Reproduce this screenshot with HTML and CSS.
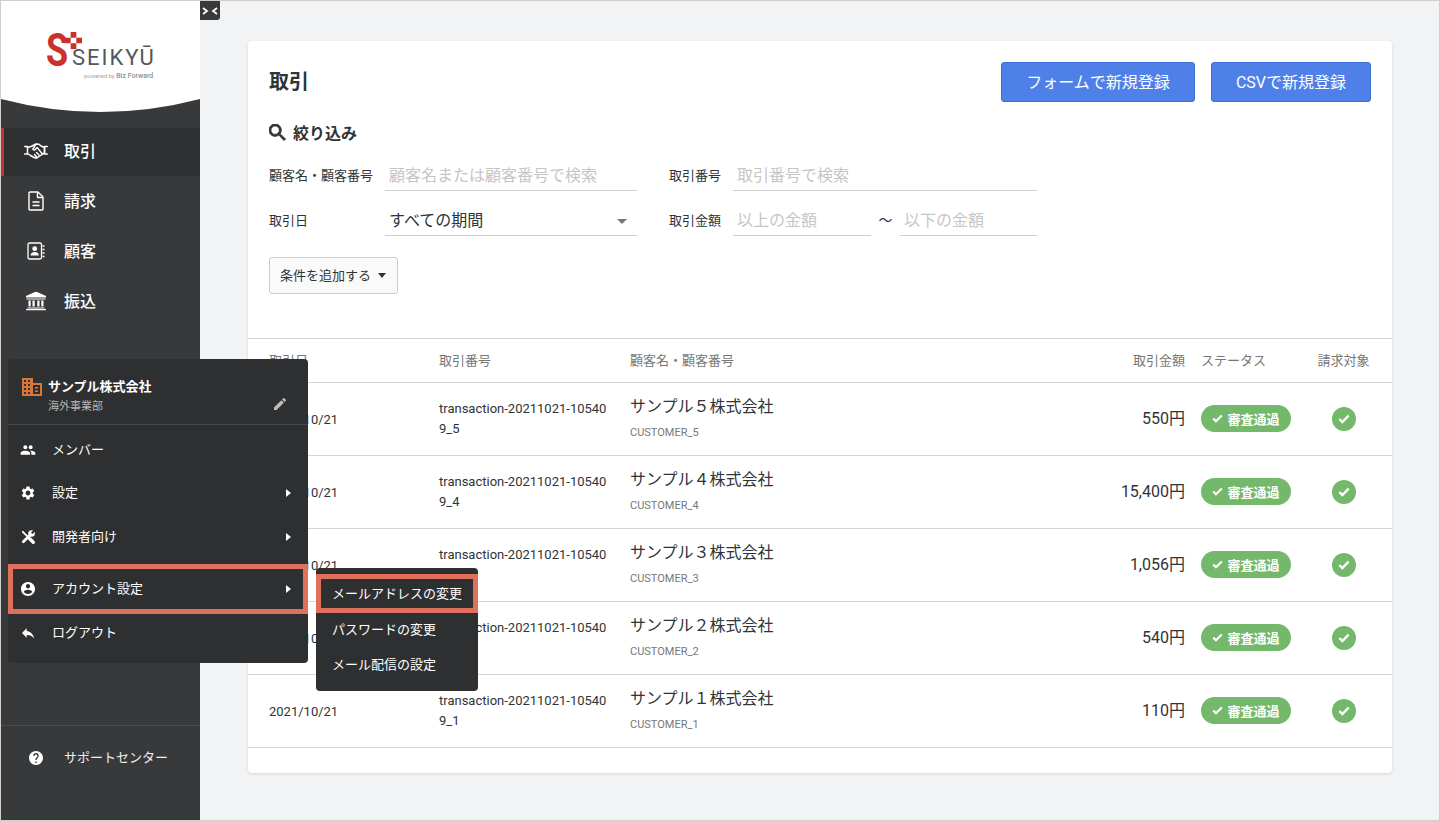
FILE: index.html
```html
<!DOCTYPE html>
<html lang="ja">
<head>
    <meta charset="UTF-8">
    <meta name="viewport" content="width=device-width, initial-scale=1.0">
    <title>取引</title>
    <link rel="stylesheet" href="styles.css">
</head>
<body>
<div class="app">

    <aside class="sidebar">
        <div class="logo-area">
            <div class="logo">
                <span class="logo-s">S</span>
                <svg class="logo-dots" width="17" height="17" viewBox="0 0 15 15"><path fill="#c9322b" d="M5 0h5v5H5zM10 5h5v5h-5zM0 5h5v5H0zM5 10h5v5H5z"/></svg>
                <span class="logo-name">SEIKYŪ</span>
                <span class="logo-sub">powered by <b>Biz Forward</b></span>
            </div>
        </div>
        <svg class="logo-curve" width="199" height="14" viewBox="0 0 199 14" preserveAspectRatio="none"><path fill="#fff" d="M0 0H199V0Q99.5 26 0 0Z"/></svg>

        <nav class="nav">
            <a class="nav-item active">
                <svg class="nav-icon" width="24" height="16" viewBox="0 0 24 16" fill="none" stroke="#fff" stroke-width="1.5" stroke-linejoin="round" stroke-linecap="round"><path d="M0.7 3.5H3.5V11H0.7M23.3 3.5H20.5V11H23.3"/><path d="M3.5 4.5L7 3.5 10 2 12 1 15 1.2 17 3 20.5 4.5V10L18 11.5 12.5 15.2 10 14.5 6.5 12.5 3.5 10.5"/><path d="M12 1.2L8.8 6.2C9.6 7.4 11 7.2 12 5.6L13.2 4.6 18 10.5M15 12L12.5 9.5M12.5 14L10.5 11.5"/></svg>
                <span>取引</span>
            </a>
            <a class="nav-item">
                <svg class="nav-icon" width="16" height="20" viewBox="0 0 16 20" fill="none" stroke="#fff" stroke-width="1.4" stroke-linejoin="round"><path d="M1 2C1 1.300 1.300 1 2 1H10L15 6V18C15 18.700 14.700 19 14 19H2C1.300 19 1 18.700 1 18Z"/><path d="M9.500 1V6.500H15" /><path d="M4.500 11H11.500M4.500 14.500H11.500" stroke-width="1.500"/></svg>
                <span>請求</span>
            </a>
            <a class="nav-item">
                <svg class="nav-icon" width="18" height="18" viewBox="0 0 18 18"><rect x="1" y="1" width="13.500" height="16" rx="1.500" fill="none" stroke="#fff" stroke-width="1.300"/><circle cx="7.700" cy="6.700" r="2.400" fill="#fff"/><path fill="#fff" d="M3.600 13.500C3.600 11 5.600 10 7.700 10S11.800 11 11.800 13.500Z"/><path stroke="#fff" stroke-width="1.300" d="M15.500 4H17.500M15.500 7.500H17.500M15.500 11H17.500M15.500 14.500H17.500"/></svg>
                <span>顧客</span>
            </a>
            <a class="nav-item">
                <svg class="nav-icon" width="21" height="19" viewBox="0 0 21 19" fill="#fff"><path d="M10.500 0L20.500 4.500V6H0.500V4.500Z"/><path d="M2 7H20V8H1V7ZM3 9H5.200V15H3ZM7 9H9.200V15H7ZM11.800 9H14V15H11.800ZM15.800 9H18V15H15.800ZM2 16H19V17H2ZM0.500 17.600H20.500V19H0.500Z"/></svg>
                <span>振込</span>
            </a>
        </nav>

        <div class="support">
            <svg class="support-icon" width="14" height="14" viewBox="2 2 20 20" fill="#fff"><path d="M12 2C6.480 2 2 6.480 2 12s4.480 10 10 10 10-4.480 10-10S17.520 2 12 2zm1 17h-2v-2h2v2zm2.070-7.750l-.9.920C13.450 12.900 13 13.500 13 15h-2v-.5c0-1.100.450-2.100 1.170-2.830l1.240-1.260c.370-.360.590-.860.590-1.410 0-1.100-.9-2-2-2s-2 .9-2 2H8c0-2.210 1.790-4 4-4s4 1.790 4 4c0 .880-.360 1.680-.930 2.250z"/></svg>
            <span>サポートセンター</span>
        </div>
    </aside>

    <div class="collapse-tab">
        <svg width="16" height="8" viewBox="0 0 16 8" fill="none" stroke="#fff" stroke-width="1.800"><path d="M1 1L5 4 1 7M15 1L11 4 15 7"/></svg>
    </div>

    <main class="main">
        <section class="card">
            <div class="card-head">
                <h1>取引</h1>
                <div class="head-buttons">
                    <a class="btn-primary btn-form">フォームで新規登録</a>
                    <a class="btn-primary btn-csv">CSVで新規登録</a>
                </div>
            </div>

            <div class="filter">
                <h2 class="filter-title">
                    <svg width="17" height="17" viewBox="3 3 18 18" fill="#2f3437"><path d="M15.500 14h-.790l-.280-.270C15.410 12.590 16 11.110 16 9.500 16 5.910 13.090 3 9.500 3S3 5.910 3 9.500 5.910 16 9.500 16c1.610 0 3.090-.590 4.230-1.570l.270.280v.790l5 4.990L20.490 19l-4.990-5zm-6 0C7.010 14 5 11.990 5 9.500S7.010 5 9.500 5 14 7.010 14 9.500 11.990 14 9.500 14z" stroke="#2f3437" stroke-width="1"/></svg>
                    <span>絞り込み</span>
                </h2>
                <div class="filter-grid">
                    <label class="filter-label">顧客名・顧客番号</label>
                    <div class="field placeholder">顧客名または顧客番号で検索</div>
                    <label class="filter-label label-second">取引番号</label>
                    <div class="field placeholder field-wide">取引番号で検索</div>

                    <label class="filter-label">取引日</label>
                    <div class="field field-select">すべての期間<i class="caret caret-grey"></i></div>
                    <label class="filter-label label-second">取引金額</label>
                    <div class="amount-range">
                        <div class="field placeholder">以上の金額</div>
                        <span class="tilde">～</span>
                        <div class="field placeholder">以下の金額</div>
                    </div>
                </div>
                <button class="btn-add">条件を追加する<i class="caret caret-dark"></i></button>
            </div>

            <table class="deals">
                <colgroup>
                    <col class="col-date"><col class="col-number"><col class="col-name"><col class="col-amount"><col class="col-status"><col class="col-target">
                </colgroup>
                <thead>
                    <tr>
                        <th>取引日</th>
                        <th>取引番号</th>
                        <th>顧客名・顧客番号</th>
                        <th class="cell-amount">取引金額</th>
                        <th class="cell-status">ステータス</th>
                        <th class="cell-target">請求対象</th>
                    </tr>
                </thead>
                <tbody>
                    <tr>
                        <td>2021/10/21</td>
                        <td class="cell-number">transaction-20211021-105409_5</td>
                        <td class="cell-customer"><div class="customer">サンプル５株式会社</div><div class="customer-id">CUSTOMER_5</div></td>
                        <td class="cell-amount price">550円</td>
                        <td class="cell-status"><span class="badge"><svg width="11" height="11" viewBox="3 5 18 14" fill="none" stroke="#fff" stroke-width="3.600"><path d="M5 12L9.500 16.500 19 7"/></svg>審査通過</span></td>
                        <td class="cell-target"><span class="ok"><svg width="12" height="12" viewBox="3 5 18 14" fill="none" stroke="#fff" stroke-width="3.600"><path d="M5 12L9.500 16.500 19 7"/></svg></span></td>
                    </tr>
                    <tr>
                        <td>2021/10/21</td>
                        <td class="cell-number">transaction-20211021-105409_4</td>
                        <td class="cell-customer"><div class="customer">サンプル４株式会社</div><div class="customer-id">CUSTOMER_4</div></td>
                        <td class="cell-amount price">15,400円</td>
                        <td class="cell-status"><span class="badge"><svg width="11" height="11" viewBox="3 5 18 14" fill="none" stroke="#fff" stroke-width="3.600"><path d="M5 12L9.500 16.500 19 7"/></svg>審査通過</span></td>
                        <td class="cell-target"><span class="ok"><svg width="12" height="12" viewBox="3 5 18 14" fill="none" stroke="#fff" stroke-width="3.600"><path d="M5 12L9.500 16.500 19 7"/></svg></span></td>
                    </tr>
                    <tr>
                        <td>2021/10/21</td>
                        <td class="cell-number">transaction-20211021-105409_3</td>
                        <td class="cell-customer"><div class="customer">サンプル３株式会社</div><div class="customer-id">CUSTOMER_3</div></td>
                        <td class="cell-amount price">1,056円</td>
                        <td class="cell-status"><span class="badge"><svg width="11" height="11" viewBox="3 5 18 14" fill="none" stroke="#fff" stroke-width="3.600"><path d="M5 12L9.500 16.500 19 7"/></svg>審査通過</span></td>
                        <td class="cell-target"><span class="ok"><svg width="12" height="12" viewBox="3 5 18 14" fill="none" stroke="#fff" stroke-width="3.600"><path d="M5 12L9.500 16.500 19 7"/></svg></span></td>
                    </tr>
                    <tr>
                        <td>2021/10/21</td>
                        <td class="cell-number">transaction-20211021-105409_2</td>
                        <td class="cell-customer"><div class="customer">サンプル２株式会社</div><div class="customer-id">CUSTOMER_2</div></td>
                        <td class="cell-amount price">540円</td>
                        <td class="cell-status"><span class="badge"><svg width="11" height="11" viewBox="3 5 18 14" fill="none" stroke="#fff" stroke-width="3.600"><path d="M5 12L9.500 16.500 19 7"/></svg>審査通過</span></td>
                        <td class="cell-target"><span class="ok"><svg width="12" height="12" viewBox="3 5 18 14" fill="none" stroke="#fff" stroke-width="3.600"><path d="M5 12L9.500 16.500 19 7"/></svg></span></td>
                    </tr>
                    <tr>
                        <td>2021/10/21</td>
                        <td class="cell-number">transaction-20211021-105409_1</td>
                        <td class="cell-customer"><div class="customer">サンプル１株式会社</div><div class="customer-id">CUSTOMER_1</div></td>
                        <td class="cell-amount price">110円</td>
                        <td class="cell-status"><span class="badge"><svg width="11" height="11" viewBox="3 5 18 14" fill="none" stroke="#fff" stroke-width="3.600"><path d="M5 12L9.500 16.500 19 7"/></svg>審査通過</span></td>
                        <td class="cell-target"><span class="ok"><svg width="12" height="12" viewBox="3 5 18 14" fill="none" stroke="#fff" stroke-width="3.600"><path d="M5 12L9.500 16.500 19 7"/></svg></span></td>
                    </tr>
                </tbody>
            </table>
        </section>
    </main>

    <div class="account-menu">
        <div class="company">
            <svg class="company-icon" width="20" height="18" viewBox="0 0 20 18" fill="#d9773a"><path fill-rule="evenodd" d="M0 0H11V5H20V18H0ZM2 2V4H4V2ZM6 2V4H8V2ZM2 6V8H4V6ZM6 6V8H8V6ZM2 10V12H4V10ZM6 10V12H8V10ZM2 14V16H4V14ZM6 14V16H8V14ZM11 7V16H18V7ZM13 9H16V10.500H13ZM13 12.500H16V14H13Z"/></svg>
            <div class="company-text">
                <div class="company-name">サンプル株式会社</div>
                <div class="company-dept">海外事業部</div>
            </div>
            <svg class="company-edit" width="12" height="12" viewBox="3 3 18 18" fill="#bdbdbd"><path d="M3 17.250V21h3.750L17.810 9.940l-3.750-3.750L3 17.250zM20.710 7.040c.390-.390.390-1.020 0-1.410l-2.340-2.340c-.390-.390-1.020-.390-1.410 0l-1.830 1.830 3.750 3.750 1.830-1.830z"/></svg>
        </div>
        <a class="menu-item menu-member">
            <svg width="16" height="16" viewBox="0 0 24 24" fill="#fff"><path d="M16 11c1.660 0 2.990-1.340 2.990-3S17.660 5 16 5c-1.660 0-3 1.340-3 3s1.340 3 3 3zm-8 0c1.660 0 2.990-1.340 2.990-3S9.660 5 8 5C6.340 5 5 6.340 5 8s1.340 3 3 3zm0 2c-2.330 0-7 1.170-7 3.500V19h14v-2.500c0-2.330-4.670-3.500-7-3.500zm8 0c-.290 0-.620.020-.970.050 1.160.840 1.970 1.970 1.970 3.450V19h6v-2.500c0-2.330-4.670-3.500-7-3.500z"/></svg>
            <span>メンバー</span>
        </a>
        <a class="menu-item has-sub">
            <svg width="16" height="16" viewBox="0 0 24 24" fill="#fff"><path d="M19.140 12.940c.040-.3.060-.610.060-.940 0-.320-.020-.640-.070-.940l2.030-1.580c.180-.140.230-.410.120-.610l-1.920-3.320c-.120-.220-.370-.290-.590-.220l-2.390.960c-.5-.380-1.030-.7-1.620-.94l-.360-2.540c-.040-.240-.240-.410-.480-.410h-3.840c-.240 0-.430.170-.47.410l-.360 2.540c-.590.240-1.130.570-1.620.94l-2.390-.96c-.220-.080-.470 0-.590.220L2.740 8.870c-.120.210-.080.470.120.61l2.030 1.580c-.050.3-.09.630-.09.940s.020.640.07.940l-2.030 1.580c-.180.140-.230.410-.12.610l1.920 3.320c.120.220.370.290.590.220l2.390-.96c.5.380 1.030.7 1.620.94l.36 2.540c.050.240.240.410.48.410h3.840c.240 0 .440-.170.470-.41l.36-2.540c.590-.240 1.130-.56 1.620-.94l2.390.96c.22.080.47 0 .59-.22l1.920-3.320c.12-.22.07-.47-.12-.61l-2.010-1.580zM12 15.600c-1.980 0-3.600-1.620-3.600-3.600s1.620-3.600 3.600-3.600 3.600 1.620 3.600 3.600-1.620 3.600-3.600 3.600z"/></svg>
            <span>設定</span>
            <i class="arrow"></i>
        </a>
        <a class="menu-item has-sub">
            <svg width="15" height="15" viewBox="0 0 16 16" fill="none" stroke="#fff" stroke-linecap="round"><path d="M2.500 2.500L13 13" stroke-width="2"/><path d="M9.800 9.800L13.600 13.600" stroke-width="3.600"/><path d="M11.500 4.500L3 13" stroke-width="3"/><circle cx="11.800" cy="4.200" r="3.500" fill="#fff" stroke="none"/><path d="M12 4L15.500 0.500" stroke="#2e2f31" stroke-width="2.200" stroke-linecap="butt"/></svg>
            <span>開発者向け</span>
            <i class="arrow"></i>
        </a>
        <a class="menu-item has-sub menu-current">
            <svg width="14" height="14" viewBox="2 2 20 20" fill="#fff"><path d="M12 2C6.480 2 2 6.480 2 12s4.480 10 10 10 10-4.480 10-10S17.520 2 12 2zm0 3c1.660 0 3 1.340 3 3s-1.340 3-3 3-3-1.340-3-3 1.340-3 3-3zm0 14.200c-2.500 0-4.710-1.280-6-3.220.030-1.990 4-3.080 6-3.080 1.990 0 5.970 1.090 6 3.080-1.290 1.940-3.500 3.220-6 3.220z"/></svg>
            <span>アカウント設定</span>
            <i class="arrow"></i>
        </a>
        <a class="menu-item">
            <svg width="16" height="16" viewBox="0 0 24 24" fill="#fff"><path d="M10 9V5l-7 7 7 7v-4.100c5 0 8.500 1.600 11 5.100-1-5-4-10-11-11z"/></svg>
            <span>ログアウト</span>
        </a>
    </div>

    <div class="sub-menu">
        <a class="sub-item sub-current">メールアドレスの変更</a>
        <a class="sub-item">パスワードの変更</a>
        <a class="sub-item">メール配信の設定</a>
    </div>

</div>
</body>
</html>
```

FILE: styles.css
```css
html, body {
    margin: 0;
    padding: 0;
}
body {
    font-family: Roboto, "Noto Sans CJK JP", sans-serif;
    color: #2f3437;
}
.app {
    position: relative;
    display: flex;
    width: 1440px;
    height: 821px;
    box-sizing: border-box;
    border: 1px solid #cfcfcf;
    background-color: #f2f3f5;
    overflow: hidden;
}
.sidebar {
    display: flex;
    flex-direction: column;
    width: 199px;
    flex-shrink: 0;
    background-color: #38393b;
    color: #fff;
}
.logo-area {
    height: 98px;
    background-color: #fff;
    position: relative;
}
.logo-curve {
    display: block;
}
.logo {
    position: absolute;
    left: 46px;
    top: 30px;
    width: 110px;
    height: 50px;
}
.logo-s {
    position: absolute;
    left: -1px;
    top: -6px;
    font-size: 46px;
    font-weight: 700;
    line-height: 50px;
    color: #c9322b;
    transform: scaleX(0.78);
    transform-origin: left center;
}
.logo-dots {
    position: absolute;
    left: 18px;
    top: 1px;
}
.logo-name {
    position: absolute;
    left: 25px;
    top: 14px;
    font-size: 22px;
    line-height: 26px;
    letter-spacing: 2px;
    color: #55575a;
    white-space: nowrap;
}
.logo-sub {
    position: absolute;
    left: 37px;
    top: 41px;
    font-size: 6px;
    line-height: 8px;
    color: #a6a6a6;
    white-space: nowrap;
}
.logo-sub b {
    font-size: 7px;
    font-weight: 500;
    color: #8f8f8f;
}
.nav {
    margin-top: 15px;
    display: flex;
    flex-direction: column;
    gap: 2px;
}
.nav-item {
    position: relative;
    display: flex;
    align-items: center;
    box-sizing: border-box;
    height: 48px;
    padding-left: 63px;
    padding-bottom: 5px;
    font-size: 16px;
    font-weight: 500;
}
.nav-item.active {
    background-color: #2f3032;
    box-shadow: inset 3px 0 0 #c9322b;
}
.nav-icon {
    position: absolute;
    left: 35px;
    top: calc(50% - 1px);
    transform: translate(-50%, -50%);
}
.support {
    position: relative;
    margin-top: auto;
    height: 95px;
    box-sizing: border-box;
    border-top: 1px solid #4a4b4d;
    display: flex;
    align-items: flex-start;
    padding: 22px 0 0 63px;
    font-size: 13px;
    line-height: 19px;
    color: #eee;
}
.support-icon {
    position: absolute;
    left: 28px;
    top: 25px;
}
.collapse-tab {
    position: absolute;
    left: 199px;
    top: 0;
    width: 20px;
    height: 19px;
    display: flex;
    align-items: center;
    justify-content: center;
    background-color: #38393b;
    border-bottom-right-radius: 3px;
}
.main {
    flex: 1;
    padding: 40px 47px 0 48px;
}
.card {
    height: 732px;
    background-color: #fff;
    border-radius: 4px;
    box-shadow: 0 1px 3px rgba(0, 0, 0, 0.12);
}
.card-head {
    display: flex;
    justify-content: space-between;
    align-items: center;
    padding: 21px 21px 0 21px;
}
h1 {
    margin: 0 0 4px 0;
    font-size: 20px;
    font-weight: 700;
}
.head-buttons {
    display: flex;
    gap: 16px;
}
.btn-primary {
    display: flex;
    align-items: center;
    justify-content: center;
    height: 40px;
    box-sizing: border-box;
    padding-bottom: 3px;
    background-color: #4e80e8;
    border: 1px solid #3f6fd4;
    border-radius: 3px;
    color: #fff;
    font-size: 16px;
}
.btn-form {
    width: 194px;
}
.btn-csv {
    width: 160px;
}
.filter {
    padding: 0 21px;
}
.filter-title {
    display: flex;
    align-items: center;
    gap: 7px;
    margin: 19px 0 0 0;
    height: 22px;
    font-size: 16px;
    font-weight: 700;
}
.filter-grid {
    display: grid;
    grid-template-columns: 116px 252px 96px 304px;
    grid-auto-rows: 45px;
    margin-top: 8px;
    align-items: stretch;
}
.filter-label {
    display: flex;
    align-items: center;
    box-sizing: border-box;
    padding-top: 1px;
    font-size: 13px;
    color: #2f3437;
    height: 34px;
    margin-top: 6px;
}
.label-second {
    padding-left: 32px;
}
.field {
    position: relative;
    display: flex;
    align-items: center;
    box-sizing: border-box;
    height: 34px;
    margin-top: 6px;
    padding-left: 4px;
    border-bottom: 1px solid #cfcfcf;
    font-size: 16px;
    color: #2f3437;
}
.placeholder {
    color: #c6c6c6;
}
.amount-range {
    display: grid;
    grid-template-columns: 138px 29px 137px;
}
.tilde {
    height: 34px;
    margin-top: 6px;
    display: flex;
    align-items: center;
    justify-content: center;
    font-size: 14px;
}
.caret {
    display: inline-block;
    width: 0;
    height: 0;
    border-left: 5px solid transparent;
    border-right: 5px solid transparent;
}
.caret-grey {
    position: absolute;
    right: 10px;
    top: 17px;
    border-top: 5px solid #777;
}
.caret-dark {
    margin-left: 7px;
    vertical-align: 2px;
    border-left-width: 4.5px;
    border-right-width: 4.5px;
    border-top: 5px solid #333;
}
.btn-add {
    display: block;
    width: 129px;
    height: 37px;
    margin-top: 16px;
    padding: 0 1px 3px 0;
    background-color: #fafafa;
    border: 1px solid #ccc;
    border-radius: 3px;
    font-family: inherit;
    font-size: 13px;
    color: #2f3437;
}
.deals {
    width: 1144px;
    margin-top: 44px;
    table-layout: fixed;
    border-collapse: collapse;
    border-top: 1px solid #d4d4d4;
}
.col-date, .col-number {
    width: 191px;
}
.col-name {
    width: 400px;
}
.col-amount {
    width: 155px;
}
.col-status {
    width: 131px;
}
.col-target {
    width: 76px;
}
.deals th {
    box-sizing: border-box;
    height: 44px;
    padding: 0 0 3px 0;
    text-align: left;
    font-size: 13px;
    font-weight: 400;
    color: #777;
}
.deals td {
    box-sizing: border-box;
    height: 73px;
    padding: 0;
    font-size: 13px;
    border-top: 1px solid #d4d4d4;
}
.deals tbody tr:last-child {
    border-bottom: 1px solid #d4d4d4;
}
.deals th:first-child, .deals td:first-child {
    padding-left: 21px;
}
.deals .cell-number {
    padding-right: 21px;
    word-break: break-all;
    line-height: 20px;
}
.deals .cell-customer {
    padding-bottom: 3px;
}
.customer {
    font-size: 16px;
    line-height: 22px;
}
.customer-id {
    margin-top: 8px;
    font-size: 11px;
    line-height: 14px;
    color: #777;
}
.deals .cell-amount {
    text-align: right;
}
.deals .price {
    padding-bottom: 4px;
    font-size: 16px;
}
.deals .cell-status {
    padding-left: 16px;
}
.deals td.cell-status {
    padding-bottom: 2px;
}
.deals .cell-target {
    padding-right: 21px;
    text-align: center;
}
.badge {
    display: inline-flex;
    align-items: center;
    justify-content: center;
    gap: 4px;
    width: 90px;
    height: 27px;
    border-radius: 14px;
    background-color: #74b86b;
    color: #fff;
    font-size: 13px;
    font-weight: 700;
    vertical-align: middle;
}
.ok {
    display: inline-flex;
    align-items: center;
    justify-content: center;
    width: 24px;
    height: 24px;
    border-radius: 50%;
    background-color: #74b86b;
    vertical-align: middle;
}
.account-menu {
    position: absolute;
    left: 7px;
    top: 358px;
    width: 300px;
    height: 304px;
    background-color: #2e2f31;
    border-radius: 4px;
    color: #fff;
}
.company {
    position: relative;
    height: 66px;
    box-sizing: border-box;
    border-bottom: 1px solid #47484a;
    padding: 18px 0 0 40px;
}
.company-icon {
    position: absolute;
    left: 14px;
    top: 19px;
}
.company-name {
    font-size: 13px;
    font-weight: 700;
    line-height: 20px;
}
.company-dept {
    font-size: 11px;
    line-height: 20px;
    color: #b5b5b5;
}
.company-edit {
    position: absolute;
    right: 22px;
    top: 39px;
}
.menu-item {
    position: relative;
    display: flex;
    align-items: center;
    height: 43.5px;
    padding-left: 44px;
    font-size: 13px;
    line-height: 18px;
}
.menu-item svg {
    position: absolute;
    left: 20px;
    top: 50%;
    transform: translate(-50%, -50%);
}
.menu-member {
    margin-top: 3px;
}
.menu-current {
    box-sizing: border-box;
    height: 50px;
    margin-top: 5.5px;
    padding-left: 39px;
    border: 5px solid #e0705c;
    margin-bottom: -3px;
}
.menu-current svg {
    left: 15px;
}
.menu-current .arrow {
    right: 12px;
}
.arrow {
    position: absolute;
    right: 17px;
    top: 50%;
    margin-top: -4px;
    width: 0;
    height: 0;
    border-top: 4px solid transparent;
    border-bottom: 4px solid transparent;
    border-left: 5px solid #fff;
}
.sub-menu {
    position: absolute;
    left: 315px;
    top: 567px;
    width: 162px;
    height: 123px;
    box-sizing: border-box;
    padding-top: 6px;
    background-color: #2e2f31;
    border-radius: 4px;
    color: #fff;
}
.sub-item {
    display: flex;
    align-items: center;
    box-sizing: border-box;
    height: 35px;
    padding-left: 16px;
    padding-bottom: 5px;
    font-size: 13px;
}
.sub-current {
    height: 39px;
    padding-left: 11px;
    padding-bottom: 2px;
    border: 5px solid #e0705c;
}
```
